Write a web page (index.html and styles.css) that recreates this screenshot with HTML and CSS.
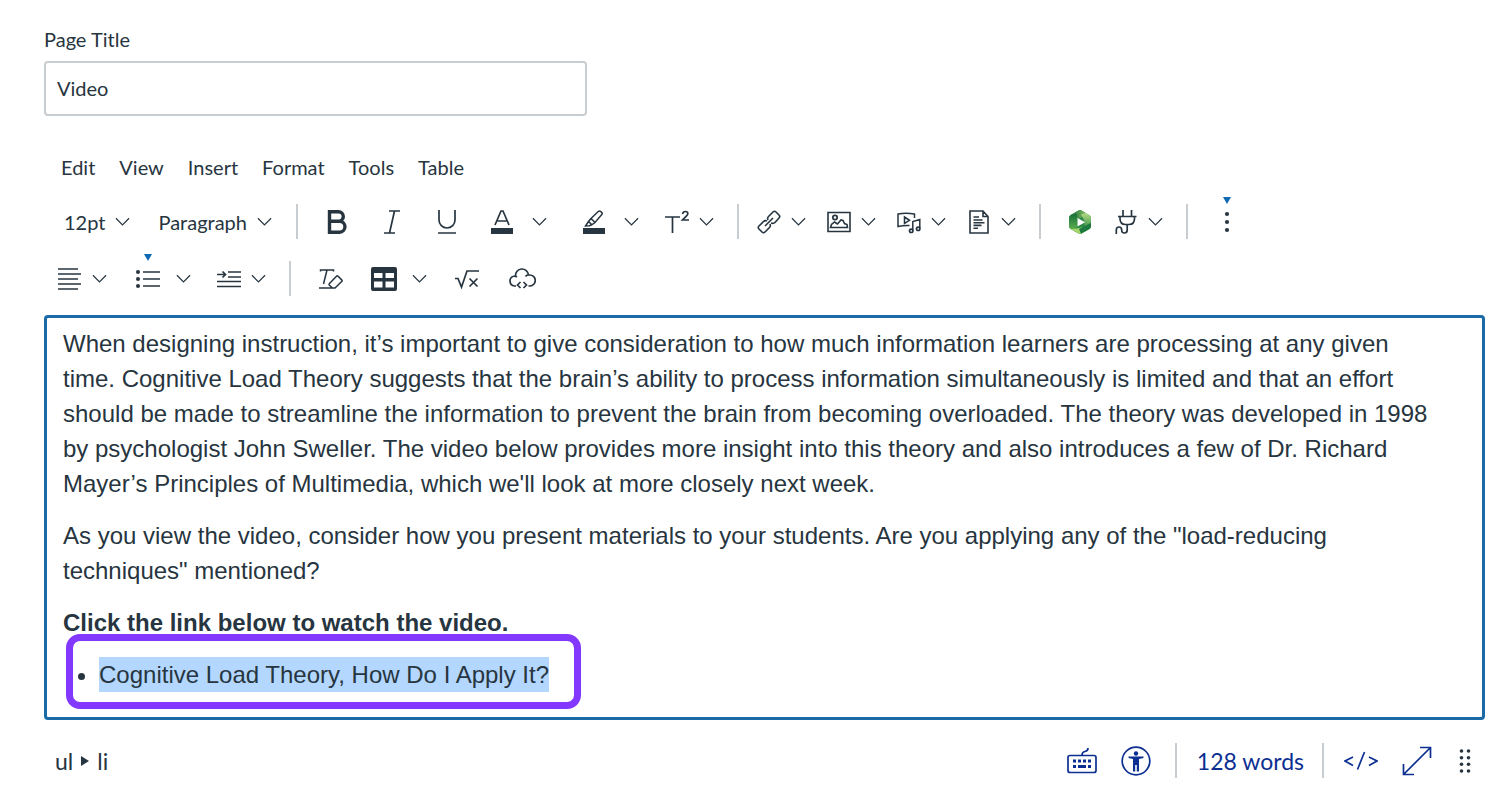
FILE: index.html
```html
<!DOCTYPE html>
<html lang="en">
<head>
    <meta charset="UTF-8">
    <meta name="viewport" content="width=device-width, initial-scale=1.0">
    <title>Video</title>
    <link rel="stylesheet" href="styles.css">
</head>
<body>
    <svg class="sprite" aria-hidden="true">
        <symbol id="chevron" viewBox="0 0 16 10"><path d="M1 1l7 7 7-7"/></symbol>
        <symbol id="marker" viewBox="0 0 8 7"><path d="M0 0h8L4 7z"/></symbol>
    </svg>

    <main class="page">
        <label class="title-label" for="title">Page Title</label>
        <input class="title-input" id="title" type="text" value="Video">

        <nav class="menubar">
            <button>Edit</button>
            <button>View</button>
            <button>Insert</button>
            <button>Format</button>
            <button>Tools</button>
            <button>Table</button>
        </nav>

        <div class="toolbar">
            <button class="text-btn">12pt <svg class="chevron"><use href="#chevron"/></svg></button>
            <button class="text-btn">Paragraph <svg class="chevron"><use href="#chevron"/></svg></button>
            <span class="divider"></span>
            <button class="icon-btn" aria-label="Bold">
                <svg class="icon" viewBox="0 0 24 24"><path stroke-width="3.400" d="M4.500 1.700h9a4.800 4.800 0 0 1 0 9.600H4.500zM4.500 11.300h10a5.400 5.400 0 0 1 0 10.900h-10z"/></svg>
            </button>
            <button class="icon-btn" aria-label="Italic">
                <svg class="icon" viewBox="0 0 24 24"><path d="M9 1h11M4 23h11M14.500 1l-5 22"/></svg>
            </button>
            <button class="icon-btn" aria-label="Underline">
                <svg class="icon" viewBox="0 0 24 24"><path d="M4 0v10a8 8 0 0 0 16 0V0M3 23h18"/></svg>
            </button>
            <div class="split">
                <button class="icon-btn" aria-label="Text color">
                    <svg class="icon" viewBox="0 0 24 24"><path d="M5 15L11 1h2l6 14M7.500 11h9"/><path class="solid" d="M1 18h22v6H1z"/></svg>
                </button>
                <button class="more-btn" aria-label="Text colors"><svg class="chevron"><use href="#chevron"/></svg></button>
            </div>
            <div class="split">
                <button class="icon-btn" aria-label="Background color">
                    <svg class="icon" viewBox="0 0 24 24"><path stroke-width="1.500" d="M9 8.500L16.500 1.300q1-.8 2 0l1.300 1.300q.9 1 0 2L13 12.500zM9 8.500L6.500 11.500 9.800 14.800 13 12.500M6.500 11.500L3.500 16l4-.2 2.300-1"/><path class="solid" d="M1 18h22v6H1z"/></svg>
                </button>
                <button class="more-btn" aria-label="Background colors"><svg class="chevron"><use href="#chevron"/></svg></button>
            </div>
            <button class="menu-btn" aria-label="Superscript and subscript">
                <svg class="icon" viewBox="0 0 24 24"><path d="M0 7h15M7.500 7v16"/><path d="M17.500 4q.5-2.500 3-2.500 2.300 0 2.300 2 0 1.300-1.500 2.700L17.500 10H24"/></svg>
                <svg class="chevron"><use href="#chevron"/></svg>
            </button>
            <span class="divider"></span>
            <button class="menu-btn" aria-label="Links">
                <svg class="icon" viewBox="0 0 24 24"><path stroke-width="1.600" d="M11 10q-1-2 .500-3.500l4.500-4.500q1.500-1.500 3 0l3 3q1.500 1.500 0 3L18 12.500q-1.500 1.500-4 .500M13 14q1 2-.500 3.500L8 22q-1.500 1.500-3 0l-3-3q-1.500-1.500 0-3l4.500-4.500q1.500-1.500 3.500-.500M8 16l8-8"/></svg>
                <svg class="chevron"><use href="#chevron"/></svg>
            </button>
            <button class="menu-btn" aria-label="Images">
                <svg class="icon" viewBox="0 0 24 24"><path stroke-width="1.600" d="M1 2.500h22v19H1zM3.500 17.500l1-3 3-2.500 3 2 3.500-4 2 .5 1.500 3 2.500 1 .5 3z"/><circle cx="8" cy="7.500" r="2.200"/></svg>
                <svg class="chevron"><use href="#chevron"/></svg>
            </button>
            <button class="menu-btn" aria-label="Record or upload media">
                <svg class="icon" viewBox="0 0 24 24"><path stroke-width="1.500" d="M12.500 15.500Q6 15.300 1 16.500V4q8-1.700 16.500 0v4M7.500 7v6.500l5-3.200zM15.800 20.500v-9l7-2v9"/><circle cx="14.200" cy="20.800" r="1.700"/><circle cx="21.200" cy="18.800" r="1.700"/></svg>
                <svg class="chevron"><use href="#chevron"/></svg>
            </button>
            <button class="menu-btn" aria-label="Documents">
                <svg class="icon" viewBox="0 0 24 24"><path stroke-width="1.600" d="M3 1h13l5 5.500V23H3zM16 1v5.500h5M6.500 7H12M6.500 10h9M6.500 12.700h11M6.500 15.400h8M6.500 18.200h4.500"/></svg>
                <svg class="chevron"><use href="#chevron"/></svg>
            </button>
            <span class="divider"></span>
            <button class="icon-btn" aria-label="Studio video">
                <svg class="logo" viewBox="0 0 24 26">
                    <defs>
                        <linearGradient id="leafTop" x1="0" y1="0" x2="1" y2="0"><stop offset="0" stop-color="#1d6b3b"/><stop offset="1" stop-color="#8fc866"/></linearGradient>
                        <linearGradient id="leafRight" x1="0" y1="0" x2="0" y2="1"><stop offset="0" stop-color="#b5dd86"/><stop offset="1" stop-color="#2f8a43"/></linearGradient>
                        <linearGradient id="leafLeft" x1="0" y1="0" x2="0" y2="1"><stop offset="0" stop-color="#17703c"/><stop offset="1" stop-color="#62b04e"/></linearGradient>
                    </defs>
                    <path fill="#2a8a48" d="M10.500 1.500q1.500-.8 3 0L21 6q2 1 2 3v8q0 2-1.500 3l-8 4.500q-1.500.8-3 0L2.500 20Q1 19 1 17V9q0-2 1.500-3z"/>
                    <path fill="url(#leafTop)" d="M3 6l7.500-4.500q1.500-.8 3 0L20 5.500 10 10l-7 3z"/>
                    <path fill="url(#leafRight)" d="M13 5.500l5-1.500 3 2q2 1 2 3v6l-6 5-1-9z"/>
                    <path fill="url(#leafLeft)" d="M3 6l6-1v13l-3 3-3.500-1Q1 19 1 17V9q0-2 2-3z"/>
                    <path fill="#a7d56e" d="M2 19.500l4 .5 10-2 5.500 2-8 4.500q-1.500.8-3 0z"/>
                    <path fill="#1c7a40" d="M11 20l12-6v3q0 2-1.500 3L13 24.700z"/>
                    <path fill="#fff" d="M9.500 9v8.500l7.500-4.200z"/>
                </svg>
            </button>
            <button class="menu-btn" aria-label="Apps">
                <svg class="icon" viewBox="0 0 24 24"><path d="M9 0v6M17.500 0v6M4 6.500h18.500M6 6.500v2q0 6 5.500 6h3.500q5.500 0 5.500-6v-2M13.200 14.500V20q0 3-2.800 3t-2.700-3q0-3-2.700-3T2.300 20v4"/></svg>
                <svg class="chevron"><use href="#chevron"/></svg>
            </button>
            <span class="divider"></span>
            <button class="icon-btn" aria-label="Reveal or hide additional toolbar items">
                <svg class="marker"><use href="#marker"/></svg>
                <svg class="icon" viewBox="0 0 24 24"><g class="solid"><circle cx="12" cy="4" r="2.100"/><circle cx="12" cy="12" r="2.100"/><circle cx="12" cy="20" r="2.100"/></g></svg>
            </button>
        </div>

        <div class="toolbar">
            <button class="menu-btn" aria-label="Align">
                <svg class="icon" viewBox="0 0 24 24"><path d="M0 2h20M0 7h23M0 12h20M0 17h23M0 22h20"/></svg>
                <svg class="chevron"><use href="#chevron"/></svg>
            </button>
            <div class="split split-list">
                <button class="icon-btn" aria-label="Bulleted list">
                    <svg class="marker"><use href="#marker"/></svg>
                    <svg class="icon" viewBox="0 0 24 24"><path stroke-width="1.600" d="M7 5h17M7 12h17M7 19h17"/><g class="solid"><circle cx="2" cy="5" r="2"/><circle cx="2" cy="12" r="2"/><circle cx="2" cy="19" r="2"/></g></svg>
                </button>
                <button class="more-btn" aria-label="List styles"><svg class="chevron"><use href="#chevron"/></svg></button>
            </div>
            <button class="menu-btn" aria-label="Indent">
                <svg class="icon" viewBox="0 0 24 24"><path d="M11 5h13M11 10h13M0 14.500h24M0 19.500h24M0 7.500h8.500M5.500 4.500l3 3-3 3"/></svg>
                <svg class="chevron"><use href="#chevron"/></svg>
            </button>
            <span class="divider"></span>
            <button class="icon-btn" aria-label="Clear formatting">
                <svg class="icon" viewBox="0 0 24 24"><path stroke-width="1.500" d="M1.500 4.500V3h13v1.500M8 3L4.500 17M0 21h14M10.500 16.500l7-7.200q.8-.8 1.600 0l3.600 3.600q.8.800 0 1.600L16 21h-2.500l-3-2.700q-.9-.9 0-1.800z"/></svg>
            </button>
            <div class="split split-table">
                <button class="icon-btn" aria-label="Table">
                    <svg class="icon-table" viewBox="0 0 28 24"><path class="solid" fill-rule="evenodd" d="M3 0h22q2 0 2 2v20q0 2-2 2H3q-2 0-2-2V2q0-2 2-2zM4 6v5h8.500V6zM15.500 6v5H24V6zM4 14.500v6h8.500v-6zM15.500 14.500v6H24v-6z"/></svg>
                </button>
                <button class="more-btn" aria-label="Table options"><svg class="chevron"><use href="#chevron"/></svg></button>
            </div>
            <button class="icon-btn" aria-label="Insert math equation">
                <svg class="icon" viewBox="0 0 24 24"><path stroke-width="1.700" d="M0 11.500h3L6.500 20 12 4h12M14.500 11.500l8 8M22.500 11.500l-8 8"/></svg>
            </button>
            <button class="icon-btn" aria-label="Embed">
                <svg class="icon-cloud" viewBox="0 0 28 24"><path d="M8 19H6.500a5 5 0 0 1-.8-9.800q1.800-.5 3.300.8M7.500 9a6.500 6.500 0 0 1 13-1M17.500 9.500q1.500-2 4-1.500a5.500 5.500 0 0 1 .5 11H20.500M12.500 15l-3 3 3 3M15.500 15l3 3-3 3"/></svg>
            </button>
        </div>

        <div class="editor" contenteditable="true" role="textbox" aria-label="Page content" spellcheck="false">
            <p>When designing instruction, it’s important to give consideration to how much information learners are processing at any given time. Cognitive Load Theory suggests that the brain’s ability to process information simultaneously is limited and that an effort should be made to streamline the information to prevent the brain from becoming overloaded. The theory was developed in 1998 by psychologist John Sweller. The video below provides more insight into this theory and also introduces a few of Dr. Richard Mayer’s Principles of Multimedia, which we'll look at more closely next week.</p>
            <p>As you view the video, consider how you present materials to your students. Are you applying any of the "load-reducing techniques" mentioned?</p>
            <p><strong>Click the link below to watch the video.</strong></p>
            <ul>
                <li><span class="selected">Cognitive Load Theory, How Do I Apply It?</span><span class="callout"></span></li>
            </ul>
        </div>

        <footer class="statusbar">
            <div class="path">
                <span>ul</span>
                <svg class="path-arrow" viewBox="0 0 8 10"><path d="M0 0l8 5-8 5z"/></svg>
                <span>li</span>
            </div>
            <div class="status-tools">
                <button aria-label="View keyboard shortcuts">
                    <svg class="status-icon" viewBox="0 0 30 30"><path d="M3 9.500h24q2 0 2 2v13q0 2-2 2H3q-2 0-2-2v-13q0-2 2-2zM15 9q0-3 3-3.500t3-3.500"/><path class="solid" d="M6 13.500h3v3H6zM11 13.500h3v3h-3zM16 13.500h3v3h-3zM21 13.500h3v3h-3zM6 19h3v3H6zM11 19h8v3h-8zM21 19h3v3h-3z"/></svg>
                </button>
                <button aria-label="Accessibility checker">
                    <svg class="status-icon" viewBox="0 0 30 30"><circle cx="15" cy="15" r="13.800"/><circle class="solid" cx="15" cy="7.500" r="2.200"/><path class="solid" d="M7.500 10.500h15V12L18 13v12.500h-2.200V19h-1.600v6.500H12V13l-4.500-1z"/></svg>
                </button>
                <span class="divider"></span>
                <button class="word-count">128 words</button>
                <span class="divider"></span>
                <button aria-label="Switch to the html editor">
                    <svg class="code-icon" viewBox="0 0 34 30"><path d="M9 11L1 15l8 4.500M25 11l8 4-8 4.500M20.500 6l-7 17.500"/></svg>
                </button>
                <button aria-label="Fullscreen">
                    <svg class="status-icon" viewBox="0 0 30 30"><path d="M1.500 28.500l27-27M18 1.500h10.500V12M1.500 18v10.500H12"/></svg>
                </button>
                <button class="grip" aria-label="Drag to resize">
                    <svg class="grip-icon" viewBox="0 0 12 26"><g class="solid"><circle cx="2.500" cy="3" r="1.800"/><circle cx="9.500" cy="3" r="1.800"/><circle cx="2.500" cy="9.700" r="1.800"/><circle cx="9.500" cy="9.700" r="1.800"/><circle cx="2.500" cy="16.300" r="1.800"/><circle cx="9.500" cy="16.300" r="1.800"/><circle cx="2.500" cy="23" r="1.800"/><circle cx="9.500" cy="23" r="1.800"/></g></svg>
                </button>
            </div>
        </footer>
    </main>
</body>
</html>
```
FILE: styles.css
```css
* {
    box-sizing: border-box;
}

body {
    margin: 0;
    background-color: #fff;
    color: #273540;
    font-family: Lato, sans-serif;
    font-size: 20px;
    line-height: 24px;
}

button {
    display: flex;
    align-items: center;
    padding: 0;
    border: none;
    background: none;
    color: inherit;
    font: inherit;
    cursor: pointer;
}

svg {
    flex: none;
    fill: none;
    stroke: currentColor;
    stroke-width: 1.7;
}

.solid {
    fill: currentColor;
    stroke: none;
}

.sprite {
    position: absolute;
    width: 0;
    height: 0;
}

.page {
    padding: 27px 15px 20px 44px;
}

.title-label {
    display: block;
    margin-bottom: 10px;
}

.title-input {
    display: block;
    width: 543px;
    max-width: 100%;
    height: 55px;
    padding: 0 11px 2px;
    border: 2px solid #c7cdd1;
    border-radius: 4px;
    color: inherit;
    font: inherit;
}

.menubar {
    display: flex;
    gap: 24px;
    margin-top: 39px;
    margin-bottom: 14px;
    padding-left: 17px;
}

/* Toolbar */
.toolbar {
    display: flex;
    align-items: center;
    height: 57px;
    padding-left: 8px;
}

.toolbar button {
    height: 36px;
}

.toolbar .text-btn {
    gap: 10px;
    padding: 0 16px 0 12px;
}

.toolbar .icon-btn {
    position: relative;
    justify-content: center;
    width: 55px;
}

.toolbar .menu-btn {
    gap: 10px;
    width: 70px;
    padding-left: 6px;
}

.split {
    display: flex;
    width: 92px;
}

.more-btn {
    justify-content: center;
    width: 20px;
}

.split-list {
    width: 89px;
}

.split-table {
    width: 81px;
}

.toolbar .split-list .icon-btn,
.toolbar .split-table .icon-btn {
    width: 51px;
}

.icon {
    width: 24px;
    height: 24px;
}

.icon-table,
.icon-cloud {
    width: 28px;
    height: 24px;
}

.logo {
    width: 24px;
    height: 26px;
    stroke: none;
}

.chevron {
    width: 15px;
    height: 10px;
    stroke-width: 1.3;
}

.marker {
    position: absolute;
    top: -7px;
    left: 50%;
    width: 8px;
    height: 7px;
    margin-left: -4px;
    fill: #0e68b3;
    stroke: none;
}

.divider {
    width: 2px;
    height: 35px;
    margin: 0 12px 0 8px;
    background-color: #c7cdd1;
}

/* Editing area */
.editor {
    margin-top: 8px;
    padding: 8px 50px 25px 16px;
    border: 3px solid #1a6aa8;
    border-radius: 4px;
    outline: none;
    font-family: "Liberation Sans", Arial, sans-serif;
    font-size: 24px;
    line-height: 35px;
}

.editor p {
    margin: 0 0 17px;
}

.editor ul {
    margin: 0;
    padding-left: 36px;
}

.editor li {
    position: relative;
}

.selected {
    display: inline-block;
    background-color: #b3d7ff;
}

.callout {
    position: absolute;
    top: -23px;
    left: -33px;
    width: 515px;
    height: 75px;
    border: 7px solid #8338ff;
    border-radius: 14px;
    pointer-events: none;
}

/* Status bar */
.statusbar {
    display: flex;
    align-items: center;
    justify-content: space-between;
    margin-top: 23px;
    padding: 0 14px 0 11px;
}

.path {
    display: flex;
    align-items: center;
    gap: 8px;
    font-size: 23px;
}

.path-arrow {
    width: 8px;
    height: 10px;
    fill: currentColor;
    stroke: none;
}

.status-tools {
    display: flex;
    align-items: center;
    gap: 24px;
    color: #0c2f92;
}

.status-tools .divider {
    margin: 0 -4px 0 0;
}

.word-count {
    margin-right: -6px;
    font-size: 23px;
}

.status-icon {
    width: 30px;
    height: 30px;
}

.code-icon {
    width: 34px;
    height: 30px;
}

.grip {
    margin-left: 3px;
    color: #273540;
}

.grip-icon {
    width: 12px;
    height: 26px;
}
```
